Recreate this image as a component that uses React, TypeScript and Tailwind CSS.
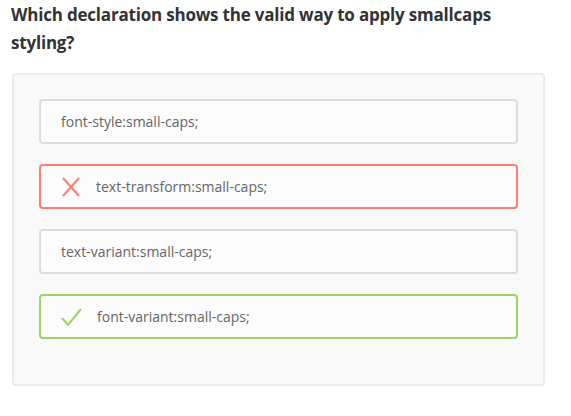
import React from 'react';

type Option = {
  text: string;
  state: 'none' | 'wrong' | 'right';
};

const options: Option[] = [
  { text: 'font-style:small-caps;', state: 'none' },
  { text: 'text-transform:small-caps;', state: 'wrong' },
  { text: 'text-variant:small-caps;', state: 'none' },
  { text: 'font-variant:small-caps;', state: 'right' },
];

function CrossIcon() {
  return (
    <svg width="20" height="20" viewBox="0 0 20 20" className="shrink-0">
      <path d="M2 1 L18 19 M18 1 L2 19" stroke="#ff7b73" strokeWidth="2" fill="none" />
    </svg>
  );
}

function CheckIcon() {
  return (
    <svg width="21" height="18" viewBox="0 0 21 18" className="shrink-0">
      <path d="M1 10 L7 17 L20 1" stroke="#9ad466" strokeWidth="2" fill="none" />
    </svg>
  );
}

function OptionRow({ option }: { option: Option }) {
  const border =
    option.state === 'wrong'
      ? 'border-[#ff7b73]'
      : option.state === 'right'
        ? 'border-[#9ad466]'
        : 'border-[#dcdcdc]';

  return (
    <div className={`flex h-[45px] items-center rounded-[4px] border-2 bg-[#fcfcfc] pl-[20px] ${border}`}>
      {option.state === 'wrong' && (
        <span className="mr-[15px] flex">
          <CrossIcon />
        </span>
      )}
      {option.state === 'right' && (
        <span className="mr-[15px] flex">
          <CheckIcon />
        </span>
      )}
      <span className="text-[14px] text-[#666666]">{option.text}</span>
    </div>
  );
}

export default function App() {
  return (
    <div className="h-[416px] w-[571px] bg-white" style={{ fontFamily: '"Open Sans", sans-serif' }}>
      <h1 className="w-[520px] px-[11px] pt-[1px] text-[17px] font-bold leading-[28px] tracking-[-0.2px] text-[#333333]">
        Which declaration shows the valid way to apply smallcaps styling?
      </h1>
      <div className="ml-[12px] mt-[16px] w-[533px] rounded-[4px] border-2 border-[#ececec] bg-[#f9f9f9] px-[25px] pb-[45px] pt-[24px]">
        <div className="flex flex-col gap-[20px]">
          {options.map((o) => (
            <OptionRow key={o.text} option={o} />
          ))}
        </div>
      </div>
    </div>
  );
}
